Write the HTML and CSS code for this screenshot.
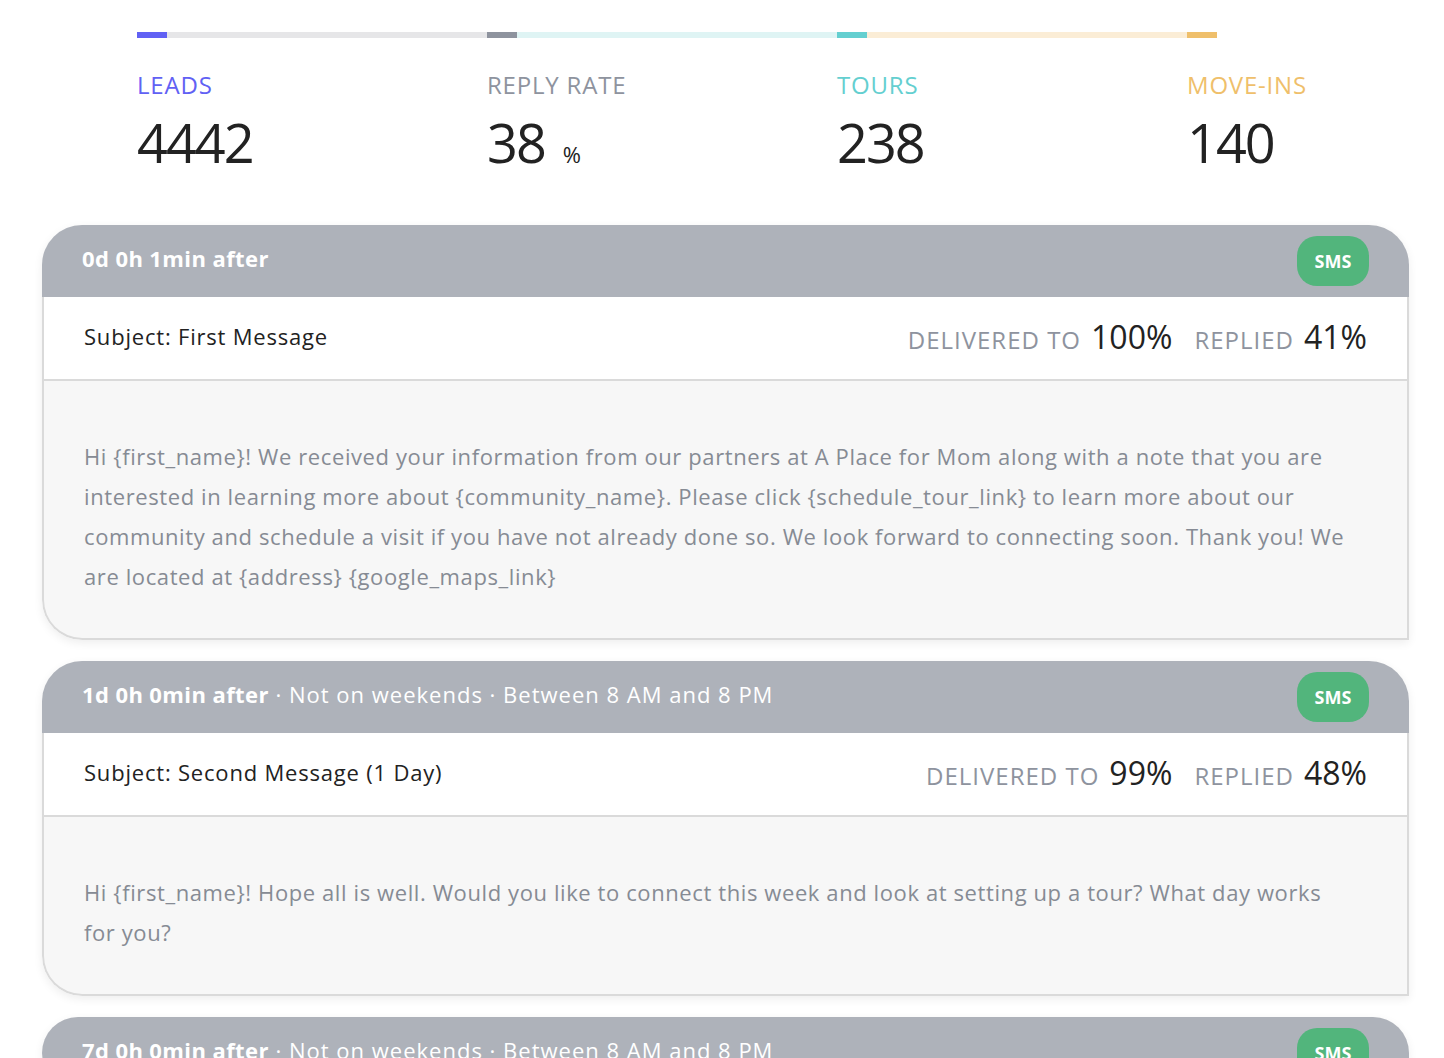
FILE: index.html
```html
<!DOCTYPE html>
<html lang="en">
<head>
    <meta charset="UTF-8">
    <meta name="viewport" content="width=device-width, initial-scale=1.0">
    <title>Sequence Overview</title>
    <link rel="stylesheet" href="styles.css">
</head>
<body>
    <div class="page">
        <!-- Funnel stats -->
        <div class="stats">
            <div class="stat stat-leads">
                <div class="stat-bar"><span class="accent"></span><span class="track"></span></div>
                <div class="stat-label">Leads</div>
                <div class="stat-value">4442</div>
            </div>
            <div class="stat stat-reply">
                <div class="stat-bar"><span class="accent"></span><span class="track"></span></div>
                <div class="stat-label">Reply Rate</div>
                <div class="stat-value">38 <span class="unit">%</span></div>
            </div>
            <div class="stat stat-tours">
                <div class="stat-bar"><span class="accent"></span><span class="track"></span></div>
                <div class="stat-label">Tours</div>
                <div class="stat-value">238</div>
            </div>
            <div class="stat stat-moveins">
                <div class="stat-bar"><span class="accent"></span></div>
                <div class="stat-label">Move-ins</div>
                <div class="stat-value">140</div>
            </div>
        </div>

        <!-- Message steps -->
        <div class="steps">
            <div class="step">
                <div class="step-header">
                    <div class="step-timing"><strong>0d 0h 1min after</strong></div>
                    <span class="badge">SMS</span>
                </div>
                <div class="step-subject">
                    <div class="subject">Subject: First Message</div>
                    <div class="metrics">
                        <span class="metric-label">Delivered to</span>
                        <span class="metric-value">100%</span>
                        <span class="metric-label">Replied</span>
                        <span class="metric-value">41%</span>
                    </div>
                </div>
                <div class="step-body">
                    <p>Hi {first_name}! We received your information from our partners at A Place for Mom along with a note that you are interested in learning more about {community_name}. Please click {schedule_tour_link} to learn more about our community and schedule a visit if you have not already done so. We look forward to connecting soon. Thank you! We are located at {address} {google_maps_link}</p>
                </div>
            </div>

            <div class="step">
                <div class="step-header">
                    <div class="step-timing"><strong>1d 0h 0min after</strong><span class="rules"> · Not on weekends · Between 8 AM and 8 PM</span></div>
                    <span class="badge">SMS</span>
                </div>
                <div class="step-subject">
                    <div class="subject">Subject: Second Message (1 Day)</div>
                    <div class="metrics">
                        <span class="metric-label">Delivered to</span>
                        <span class="metric-value">99%</span>
                        <span class="metric-label">Replied</span>
                        <span class="metric-value">48%</span>
                    </div>
                </div>
                <div class="step-body">
                    <p>Hi {first_name}! Hope all is well. Would you like to connect this week and look at setting up a tour? What day works for you?</p>
                </div>
            </div>

            <div class="step">
                <div class="step-header">
                    <div class="step-timing"><strong>7d 0h 0min after</strong><span class="rules"> · Not on weekends · Between 8 AM and 8 PM</span></div>
                    <span class="badge">SMS</span>
                </div>
            </div>
        </div>
    </div>
</body>
</html>
```

FILE: styles.css
```css
/* General Styles */
:root {
    --leads-color: #6161f4;
    --reply-color: #8e939e;
    --tours-color: #64cfd0;
    --moveins-color: #efbf6b;
    --header-bg-color: #aeb2ba;
    --badge-color: #52b57c;
    --border-color: #dadada;
    --body-bg-color: #f7f7f7;
    --text-color: #222;
    --muted-text-color: #868b94;
    --card-radius: 40px;
}

body {
    margin: 0;
    font-family: "Open Sans", "Noto Sans", Arial, sans-serif;
    color: var(--text-color);
    background-color: #fff;
}

.page {
    padding: 32px 35px 0 42px;
}

/* Funnel stats */
.stats {
    display: flex;
    padding-left: 95px;
}

.stat {
    width: 350px;
}

.stat-moveins {
    width: auto;
}

.stat-bar {
    display: flex;
    height: 6px;
}

.stat-bar .accent {
    width: 30px;
    height: 100%;
}

.stat-bar .track {
    flex: 1;
    height: 100%;
}

.stat-label {
    margin-top: 32px;
    font-size: 24px;
    font-weight: 500;
    line-height: 30px;
    letter-spacing: 0.8px;
    text-transform: uppercase;
}

.stat-value {
    margin-top: 12px;
    font-size: 54px;
    font-weight: 500;
    line-height: 60px;
    letter-spacing: -2px;
    color: var(--text-color);
}

.stat-value .unit {
    font-size: 22px;
    letter-spacing: 0;
    margin-left: 6px;
}

.stat-leads .accent { background-color: var(--leads-color); }
.stat-leads .track { background-color: #e6e6e8; }
.stat-leads .stat-label { color: var(--leads-color); }

.stat-reply .accent { background-color: var(--reply-color); }
.stat-reply .track { background-color: #dff4f4; }
.stat-reply .stat-label { color: var(--reply-color); }

.stat-tours .accent { background-color: var(--tours-color); }
.stat-tours .track { background-color: #fbedd6; }
.stat-tours .stat-label { color: var(--tours-color); }

.stat-moveins .accent { background-color: var(--moveins-color); }
.stat-moveins .stat-label { color: var(--moveins-color); }

/* Message steps */
.steps {
    margin-top: 41px;
    display: flex;
    flex-direction: column;
    gap: 21px;
}

.step {
    border-radius: var(--card-radius) var(--card-radius) 0 var(--card-radius);
    box-shadow: 0 3px 10px rgba(0, 0, 0, 0.07);
    overflow: hidden;
    background-color: var(--body-bg-color);
}

.step-header {
    display: flex;
    align-items: center;
    justify-content: space-between;
    height: 72px;
    padding: 0 40px;
    background-color: var(--header-bg-color);
    color: #fff;
}

.step-timing {
    font-size: 22px;
    font-weight: 500;
    margin-bottom: 6px;
}

.step-timing strong {
    font-weight: 700;
    letter-spacing: 0.4px;
}

.step-timing .rules {
    letter-spacing: 1px;
}

.badge {
    display: inline-flex;
    align-items: center;
    justify-content: center;
    width: 72px;
    height: 50px;
    border-radius: 20px;
    background-color: var(--badge-color);
    color: #fff;
    font-size: 18px;
    font-weight: 700;
}

.step-subject {
    display: flex;
    align-items: center;
    justify-content: space-between;
    height: 78px;
    padding: 0 40px 4px 40px;
    background-color: #fff;
    border: 2px solid var(--border-color);
    border-top: none;
}

.subject {
    font-size: 22px;
    font-weight: 500;
    letter-spacing: 0.8px;
}

.metrics {
    display: flex;
    align-items: baseline;
}

.metric-label {
    font-size: 24px;
    font-weight: 500;
    color: var(--reply-color);
    text-transform: uppercase;
    letter-spacing: 1px;
    margin-right: 10px;
}

.metric-value {
    font-size: 32px;
    font-weight: 500;
    color: var(--text-color);
}

.metric-value + .metric-label {
    margin-left: 22px;
}

.step-body {
    padding: 55px 55px 42px 40px;
    border: 2px solid var(--border-color);
    border-top: none;
    border-radius: 0 0 0 var(--card-radius);
}

.step-body p {
    margin: 0;
    font-size: 22px;
    font-weight: 500;
    line-height: 40px;
    letter-spacing: 0.6px;
    color: var(--muted-text-color);
}
```
